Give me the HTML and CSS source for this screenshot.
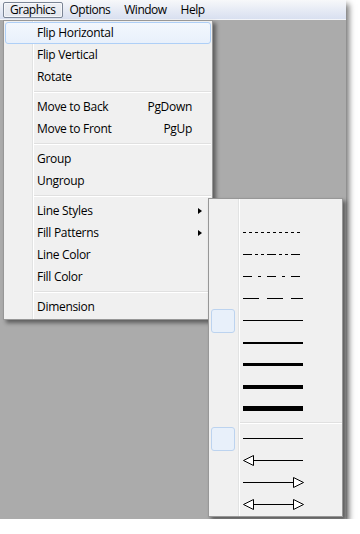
FILE: index.html
```html
<!DOCTYPE html>
<html lang="en">
<head>
  <meta charset="UTF-8" />
  <title>Graphics menu</title>
  <link rel="stylesheet" href="styles.css">
</head>
<body>
  <div class="window">
    <nav class="menubar">
      <span class="menubar-item open">Graphics</span>
      <span class="menubar-item">Options</span>
      <span class="menubar-item">Window</span>
      <span class="menubar-item">Help</span>
    </nav>

    <ul class="menu main-menu">
      <li class="item hover">Flip Horizontal</li>
      <li class="item">Flip Vertical</li>
      <li class="item">Rotate</li>
      <li class="sep"></li>
      <li class="item">Move to Back<span class="key">PgDown</span></li>
      <li class="item">Move to Front<span class="key">PgUp</span></li>
      <li class="sep"></li>
      <li class="item">Group</li>
      <li class="item">Ungroup</li>
      <li class="sep"></li>
      <li class="item">Line Styles<span class="arrow"></span></li>
      <li class="item">Fill Patterns<span class="arrow"></span></li>
      <li class="item">Line Color</li>
      <li class="item">Fill Color</li>
      <li class="sep"></li>
      <li class="item">Dimension</li>
    </ul>

    <ul class="menu submenu">
      <li class="item"></li>
      <li class="item"><svg width="62" height="22"><line x1="0" y1="11.5" x2="58" y2="11.5" stroke="#000" stroke-dasharray="3 3"/></svg></li>
      <li class="item"><svg width="62" height="22"><line x1="0" y1="11.5" x2="60" y2="11.5" stroke="#000" stroke-dasharray="9 3 3 3 3 3"/></svg></li>
      <li class="item"><svg width="62" height="22"><line x1="0" y1="11.5" x2="60" y2="11.5" stroke="#000" stroke-dasharray="9 6 3 6"/></svg></li>
      <li class="item"><svg width="62" height="22"><line x1="0" y1="11.5" x2="60" y2="11.5" stroke="#000" stroke-dasharray="16 8"/></svg></li>
      <li class="item checked"><svg width="62" height="22"><line x1="0" y1="11.5" x2="60" y2="11.5" stroke="#000" stroke-width="1"/></svg></li>
      <li class="item"><svg width="62" height="22"><line x1="0" y1="12" x2="60" y2="12" stroke="#000" stroke-width="2"/></svg></li>
      <li class="item"><svg width="62" height="22"><line x1="0" y1="11.5" x2="60" y2="11.5" stroke="#000" stroke-width="3"/></svg></li>
      <li class="item"><svg width="62" height="22"><line x1="0" y1="12" x2="60" y2="12" stroke="#000" stroke-width="4"/></svg></li>
      <li class="item"><svg width="62" height="22"><line x1="0" y1="11.5" x2="60" y2="11.5" stroke="#000" stroke-width="5"/></svg></li>
      <li class="sep"></li>
      <li class="item checked"><svg width="62" height="22"><line x1="0" y1="11.5" x2="60" y2="11.5" stroke="#000"/></svg></li>
      <li class="item"><svg width="62" height="22"><line x1="10" y1="11.5" x2="60" y2="11.5" stroke="#000"/><polygon points="0.5,11.5 10.5,6.5 10.5,16.5" fill="#fff" stroke="#000"/></svg></li>
      <li class="item"><svg width="62" height="22"><line x1="0" y1="11.5" x2="50" y2="11.5" stroke="#000"/><polygon points="50.5,6.5 60.5,11.5 50.5,16.5" fill="#fff" stroke="#000"/></svg></li>
      <li class="item"><svg width="62" height="22"><line x1="10" y1="11.5" x2="50" y2="11.5" stroke="#000"/><polygon points="0.5,11.5 10.5,6.5 10.5,16.5" fill="#fff" stroke="#000"/><polygon points="50.5,6.5 60.5,11.5 50.5,16.5" fill="#fff" stroke="#000"/></svg></li>
    </ul>
  </div>
</body>
</html>
```

FILE: styles.css
```css
* {
  box-sizing: border-box;
  margin: 0;
  padding: 0;
}
body {
  background: #fff;
  font-family: 'Open Sans', 'Noto Sans', sans-serif;
  font-size: 12px;
  letter-spacing: -0.3px;
  color: #000;
}
.window {
  position: relative;
  width: 346px;
  height: 519px;
  background: #ababab;
  box-shadow: 3px 4px 6px rgba(0,0,0,0.55);
}
.menubar {
  display: flex;
  height: 20px;
  padding: 2px 0 0 3px;
  background: linear-gradient(#f7f8fa, #e4e9f4 60%, #d9e0f0);
  border-bottom: 1px solid #f2f4f8;
}
.menubar-item {
  height: 16px;
  line-height: 14px;
  padding: 0 6px;
  border: 1px solid transparent;
  border-radius: 2px;
  letter-spacing: -0.5px;
}
.menubar-item.open {
  border-color: #7b8595;
  background: linear-gradient(#eef0f4, #e2e6ee);
  box-shadow: inset 0 0 0 1px rgba(255,255,255,0.6);
}
.menu {
  position: absolute;
  list-style: none;
  background: #f0f0f0;
  border: 1px solid #979797;
  box-shadow: 3px 3px 4px rgba(0,0,0,0.45);
}
.menu::before {
  content: '';
  position: absolute;
  top: 0;
  bottom: 0;
  width: 1px;
  background: #e2e3e3;
  border-right: 1px solid #fff;
  box-sizing: content-box;
}
.main-menu {
  left: 3px;
  top: 20px;
  width: 210px;
  padding: 1px;
}
.main-menu::before {
  left: 28px;
}
.item {
  position: relative;
  display: flex;
  align-items: center;
  height: 22px;
  padding: 0 18px 1px 31px;
  border: 1px solid transparent;
  border-radius: 3px;
}
.item.hover {
  border-color: #aecff7;
  background: linear-gradient(#f2f7fd, #e8f0fb);
}
.key {
  margin-left: auto;
}
.arrow {
  margin-left: auto;
  margin-right: -10px;
  width: 0;
  height: 0;
  border-top: 3.5px solid transparent;
  border-bottom: 3.5px solid transparent;
  border-left: 4px solid #000;
}
.sep {
  height: 8px;
  margin-left: 29px;
  display: flex;
  flex-direction: column;
  justify-content: center;
}
.sep::before {
  content: '';
  height: 1px;
  background: #e0e0e0;
  border-bottom: 1px solid #fff;
  box-sizing: content-box;
}
.submenu {
  left: 208px;
  top: 198px;
  width: 135px;
  height: 319px;
}
.submenu::before {
  left: 29px;
}
.submenu .item {
  padding: 0 0 0 34px;
  border: none;
  border-radius: 0;
}
.submenu .item svg {
  display: block;
}
.submenu .item.checked::before {
  content: '';
  position: absolute;
  left: 2px;
  top: 0;
  width: 22px;
  height: 22px;
  border: 1px solid #bcd3ef;
  border-radius: 3px;
  background: #e8f0fa;
}
.submenu .sep {
  margin-left: 30px;
}
```
